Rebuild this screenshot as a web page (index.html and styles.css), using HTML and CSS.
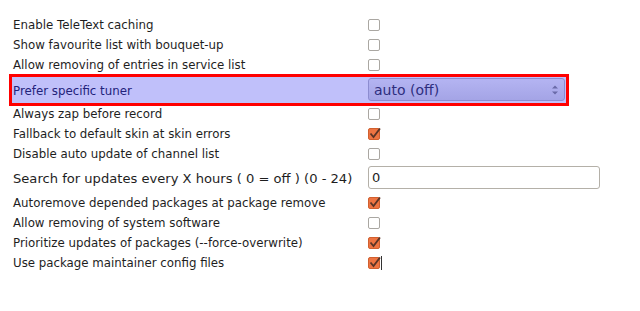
FILE: index.html
```html
<!DOCTYPE html>
<html lang="en">
<head>
    <meta charset="UTF-8">
    <title>Setup</title>
    <link rel="stylesheet" href="styles.css">
</head>
<body>
    <div class="config">
        <div class="row"><span class="label">Enable TeleText caching</span><span class="value"><span class="box"></span></span></div>
        <div class="row"><span class="label">Show favourite list with bouquet-up</span><span class="value"><span class="box"></span></span></div>
        <div class="row"><span class="label">Allow removing of entries in service list</span><span class="value"><span class="box"></span></span></div>
        <div class="row current">
            <span class="label">Prefer specific tuner</span>
            <span class="value">
                <span class="select">auto (off)
                    <svg class="spin" width="8" height="12" viewBox="0 0 8 12"><path d="M1 4.5 L4 1.5 L7 4.5 Z M1 7.5 L4 10.5 L7 7.5 Z" fill="#6a6aa8"/></svg>
                </span>
            </span>
        </div>
        <div class="row"><span class="label">Always zap before record</span><span class="value"><span class="box"></span></span></div>
        <div class="row"><span class="label">Fallback to default skin at skin errors</span><span class="value"><span class="box on"><svg width="13" height="13" viewBox="0 0 13 13"><path d="M2.5 5.5 L5.5 9 L12 0.5" fill="none" stroke="#5a3426" stroke-width="1.8"/></svg></span></span></div>
        <div class="row"><span class="label">Disable auto update of channel list</span><span class="value"><span class="box"></span></span></div>
        <div class="row tall"><span class="label wide">Search for updates every X hours ( 0 = off ) (0 - 24)</span><span class="value"><span class="input">0</span></span></div>
        <div class="row"><span class="label">Autoremove depended packages at package remove</span><span class="value"><span class="box on"><svg width="13" height="13" viewBox="0 0 13 13"><path d="M2.5 5.5 L5.5 9 L12 0.5" fill="none" stroke="#5a3426" stroke-width="1.8"/></svg></span></span></div>
        <div class="row"><span class="label">Allow removing of system software</span><span class="value"><span class="box"></span></span></div>
        <div class="row"><span class="label">Prioritize updates of packages (--force-overwrite)</span><span class="value"><span class="box on"><svg width="13" height="13" viewBox="0 0 13 13"><path d="M2.5 5.5 L5.5 9 L12 0.5" fill="none" stroke="#5a3426" stroke-width="1.8"/></svg></span></span></div>
        <div class="row"><span class="label">Use package maintainer config files</span><span class="value"><span class="box on"><svg width="13" height="13" viewBox="0 0 13 13"><path d="M2.5 5.5 L5.5 9 L12 0.5" fill="none" stroke="#5a3426" stroke-width="1.8"/></svg></span><span class="caret"></span></span></div>
    </div>
</body>
</html>
```

FILE: styles.css
```css
body {
    margin: 0;
    background: #ffffff;
    font-family: "DejaVu Sans", Verdana, sans-serif;
    font-size: 11.8px;
    color: #1e1e1e;
}
.config {
    padding: 14px 0 0 12px;
}
.row {
    display: flex;
    align-items: center;
    height: 20px;
    width: 554px;
}
.row.tall {
    height: 29px;
}
.label {
    flex-shrink: 0;
    width: 355px;
    padding: 2px 0 0 1px;
    white-space: nowrap;
}
.label.wide {
    font-size: 13.1px;
}
.value {
    display: flex;
    align-items: center;
    flex: 1;
}
.box {
    position: relative;
    box-sizing: border-box;
    width: 12px;
    height: 12px;
    border: 1px solid #aaa7a2;
    border-radius: 2px;
    background: #fff;
    margin-top: 1px;
}
.box.on {
    background: #ee7442;
    border-color: #d0602f;
}
.box svg {
    position: absolute;
    left: -1px;
    top: -1px;
}
.caret {
    width: 1px;
    height: 14px;
    background: #333;
    margin-left: 1px;
    margin-top: 2px;
}
.current {
    height: 26px;
    margin-top: 3px;
    background: #c0c0fa;
    outline: 3px solid #ff0000;
    color: #22227a;
}
.current .value {
    align-self: flex-start;
    padding-top: 1px;
}
.select {
    position: relative;
    box-sizing: border-box;
    display: flex;
    align-items: center;
    width: 197px;
    height: 23px;
    padding-left: 5px;
    border: 1px solid #8c8cd0;
    border-radius: 3px;
    background: linear-gradient(#b4b4f2, #a4a4e6);
    color: #2e2e7e;
    font-size: 14px;
}
.spin {
    position: absolute;
    right: 5px;
    top: 5px;
}
.input {
    flex-shrink: 0;
    box-sizing: border-box;
    display: flex;
    align-items: center;
    width: 232px;
    height: 23px;
    padding-left: 3px;
    border: 1px solid #b4b0a8;
    border-radius: 3px;
    font-size: 13px;
    color: #1e1e1e;
}
```
